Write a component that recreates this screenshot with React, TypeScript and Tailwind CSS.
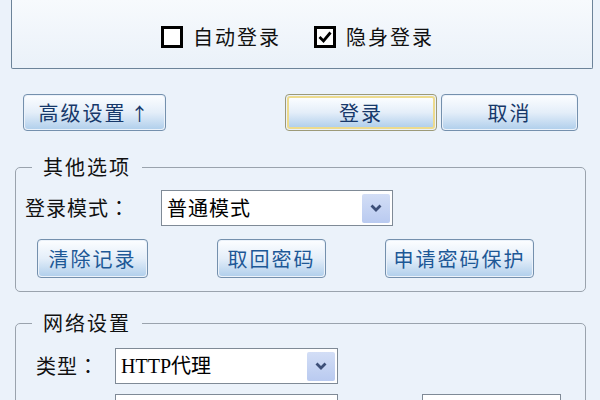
import { type ReactNode } from 'react'

const CJK = '"Noto Sans CJK SC", "Liberation Sans", sans-serif'

function CheckBox({ checked, label }: { checked?: boolean; label: string }) {
  return (
    <div className="flex items-center">
      <span className="w-[22px] h-[22px] border-[3px] border-black bg-white flex items-center justify-center">
        {checked && (
          <svg width="14" height="14" viewBox="0 0 14 14">
            <path d="M1.5 7 L5.5 11 L12.5 2.5" fill="none" stroke="#000" strokeWidth="2.8" />
          </svg>
        )}
      </span>
      <span className="ml-[10px] text-[20px] leading-none tracking-[2px] text-[#111]">{label}</span>
    </div>
  )
}

function XpButton({
  children,
  className,
  primary,
  blue,
}: {
  children: ReactNode
  className: string
  primary?: boolean
  blue?: boolean
}) {
  return (
    <button
      className={`${className} rounded-[4px] border flex items-center justify-center p-[1px] ${
        primary ? 'border-[#9c9a78]' : 'border-[#7490ad]'
      }`}
    >
      <span
        className={`w-full h-full rounded-[3px] flex items-center justify-center bg-gradient-to-b from-[#fbfdff] via-[#e4eef9] to-[#b2d0ec] text-[20px] leading-none tracking-[2px] ${
          primary ? 'border-2 border-[#eddb8e]' : ''
        } ${blue ? 'text-[#1d5896]' : 'text-[#16386a]'}`}
      >
        {children}
      </span>
    </button>
  )
}

function DropArrow() {
  return (
    <span className="w-[28px] h-[29px] mr-[2px] flex items-center justify-center bg-gradient-to-b from-[#d3def6] to-[#b9caf0] rounded-[2px]">
      <svg width="12" height="8" viewBox="0 0 12 8">
        <path d="M1.5 1.5 L6 6 L10.5 1.5" fill="none" stroke="#3d4f78" strokeWidth="2.8" />
      </svg>
    </span>
  )
}

function Select({ value, className, serif }: { value: string; className: string; serif?: boolean }) {
  return (
    <div className={`${className} h-[36px] border border-[#7f8a96] bg-white flex items-center justify-between`}>
      <span
        className={`pl-[5px] text-[20px] leading-none text-black ${
          serif ? "font-['Liberation_Serif','Noto_Sans_CJK_SC',serif] tracking-[0px]" : 'tracking-[1px]'
        }`}
      >
        {value}
      </span>
      <DropArrow />
    </div>
  )
}

function Label({ text, className }: { text: string; className: string }) {
  return (
    <span className={`${className} text-[20px] leading-none tracking-[1px] text-[#111]`}>
      {text}
      <span className="font-['Noto_Sans_CJK_TC',sans-serif]">：</span>
    </span>
  )
}

function Group({ title, children, className }: { title: string; children: ReactNode; className?: string }) {
  return (
    <fieldset className={`${className ?? ''} ml-[15px] w-[571px] border border-[#9aa3ad] rounded-[5px]`}>
      <legend className="ml-[16px] px-[11px] text-[20px] leading-[24px] tracking-[2px] text-[#111]">{title}</legend>
      {children}
    </fieldset>
  )
}

export default function App() {
  return (
    <div className="w-[600px] h-[400px] overflow-hidden bg-[#ebf2fa]" style={{ fontFamily: CJK }}>
      <div className="ml-[11px] mr-[7px] h-[69px] border-x border-b border-[#6c8399] rounded-b-[2px] bg-gradient-to-b from-[#f7fafd] to-[#eaf1f9]">
        <div className="flex items-center pt-[26px] pl-[149px] gap-[33px]">
          <CheckBox label="自动登录" />
          <CheckBox checked label="隐身登录" />
        </div>
      </div>

      <div className="flex mt-[25px] h-[37px]">
        <XpButton className="ml-[23px] w-[143px] h-full">
          高级设置<span className="ml-[4px] text-[18px]">↑</span>
        </XpButton>
        <XpButton primary className="ml-[119px] w-[152px] h-full">
          登录
        </XpButton>
        <XpButton className="ml-[4px] w-[137px] h-full">取消</XpButton>
      </div>

      <Group title="其他选项" className="mt-[24px] h-[137px]">
        <div className="flex items-center mt-[11px]">
          <Label text="登录模式" className="ml-[9px] w-[136px]" />
          <Select value="普通模式" className="w-[232px]" />
        </div>
        <div className="flex mt-[13px] h-[39px]">
          <XpButton blue className="ml-[21px] w-[111px] h-full">清除记录</XpButton>
          <XpButton blue className="ml-[69px] w-[109px] h-full">取回密码</XpButton>
          <XpButton blue className="ml-[59px] w-[149px] h-full">申请密码保护</XpButton>
        </div>
      </Group>

      <Group title="网络设置" className="mt-[19px] h-[120px]">
        <div className="flex items-center mt-[13px]">
          <Label text="类型" className="ml-[20px] w-[79px]" />
          <Select value="HTTP代理" serif className="w-[223px]" />
        </div>
        <div className="flex mt-[10px]">
          <div className="ml-[99px] w-[223px] h-[36px] border border-[#7f8a96] bg-white" />
          <div className="ml-[84px] w-[139px] h-[36px] border border-[#7f8a96] bg-white" />
        </div>
      </Group>
    </div>
  )
}
